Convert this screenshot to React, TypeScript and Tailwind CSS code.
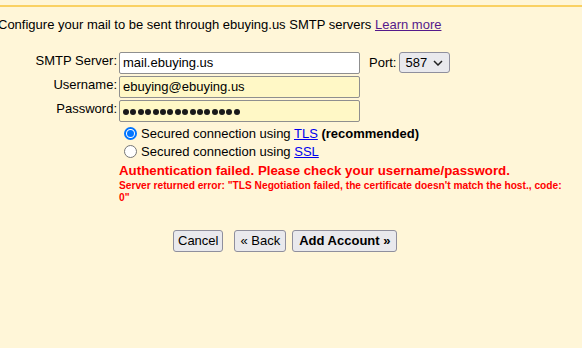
import React from 'react';

const font = { fontFamily: '"Liberation Sans", Arial, sans-serif' };

function Radio({ checked }: { checked?: boolean }) {
  return checked ? (
    <span className="flex h-[13px] w-[13px] items-center justify-center rounded-full border-2 border-[#0075ff] bg-white">
      <span className="h-[7px] w-[7px] rounded-full bg-[#0075ff]" />
    </span>
  ) : (
    <span className="h-[13px] w-[13px] rounded-full border border-[#767676] bg-white" />
  );
}

export default function App() {
  const rows = [
    { label: 'SMTP Server:', value: 'mail.ebuying.us', bg: 'bg-white', port: true },
    { label: 'Username:', value: 'ebuying@ebuying.us', bg: 'bg-[#fff8c6]' },
    { label: 'Password:', value: '', bg: 'bg-[#fff8c6]', pw: true },
  ];

  return (
    <div className="h-[348px] w-[582px] overflow-hidden bg-[#fff6d8] pt-[5px] text-[13px] text-black" style={font}>
      <div className="h-[2px] bg-[#fad163]" />
      <p className="ml-[-2px] mt-[10px] leading-[15px]">
        Configure your mail to be sent through ebuying.us SMTP servers{' '}
        <a className="text-[#551a8b] underline">Learn more</a>
      </p>

      <div className="mt-[20px] flex flex-col gap-[2px]">
        {rows.map((r) => (
          <div key={r.label} className="flex items-start">
            <div className="w-[117px] pt-[1px] text-right leading-[15px]">{r.label}</div>
            <div
              className={`ml-[2px] flex h-[22px] w-[241px] items-center rounded-[2px] border border-[#8f8f8f] px-[3px] ${r.bg}`}
            >
              {r.pw ? (
                <span className="flex gap-[1.4px] pt-[1px]">
                  {Array.from({ length: 16 }).map((_, i) => (
                    <span key={i} className="h-[6px] w-[6px] rounded-full bg-[#1a1a1a]" />
                  ))}
                </span>
              ) : (
                r.value
              )}
            </div>
            {r.port && (
              <div className="ml-[9px] flex items-center">
                <span className="leading-[20px]">Port:</span>
                <div className="ml-[3px] flex h-[21px] w-[51px] items-center justify-between rounded-[3px] border border-[#8f8f9d] bg-[#e9e9ed] pl-[5px] pr-[6px]">
                  <span>587</span>
                  <svg width="10" height="6" viewBox="0 0 10 6" fill="none" stroke="#222" strokeWidth="1.5">
                    <path d="M1 1l4 4 4-4" />
                  </svg>
                </div>
              </div>
            )}
          </div>
        ))}
      </div>

      <div className="ml-[124px] mt-[5px] flex flex-col gap-[5px]">
        <div className="flex items-center gap-[4px] leading-[13px]">
          <Radio checked />
          <span>
            Secured connection using <a className="text-[#0000ee] underline">TLS</a> <b>(recommended)</b>
          </span>
        </div>
        <div className="flex items-center gap-[4px] leading-[13px]">
          <Radio />
          <span>
            Secured connection using <a className="text-[#0000ee] underline">SSL</a>
          </span>
        </div>
      </div>

      <div className="ml-[119px] mt-[4px] w-[452px] font-bold text-[#f00]">
        <p className="text-[13.3px] leading-[18px]">Authentication failed. Please check your username/password.</p>
        <p className="text-[10.2px] leading-[12px]">
          Server returned error: "TLS Negotiation failed, the certificate doesn't match the host., code: 0"
        </p>
      </div>

      <div className="ml-[173px] mt-[26px] flex items-center">
        <button className="h-[22px] rounded-[3px] border border-[#8f8f9d] bg-[#e9e9ed] px-[4px] leading-[18px]">Cancel</button>
        <button className="ml-[11px] h-[22px] rounded-[3px] border border-[#8f8f9d] bg-[#e9e9ed] px-[5px] leading-[18px]">« Back</button>
        <button className="ml-[6px] h-[22px] rounded-[3px] border border-[#8f8f9d] bg-[#e9e9ed] px-[6px] font-bold leading-[18px]">Add Account »</button>
      </div>
    </div>
  );
}
